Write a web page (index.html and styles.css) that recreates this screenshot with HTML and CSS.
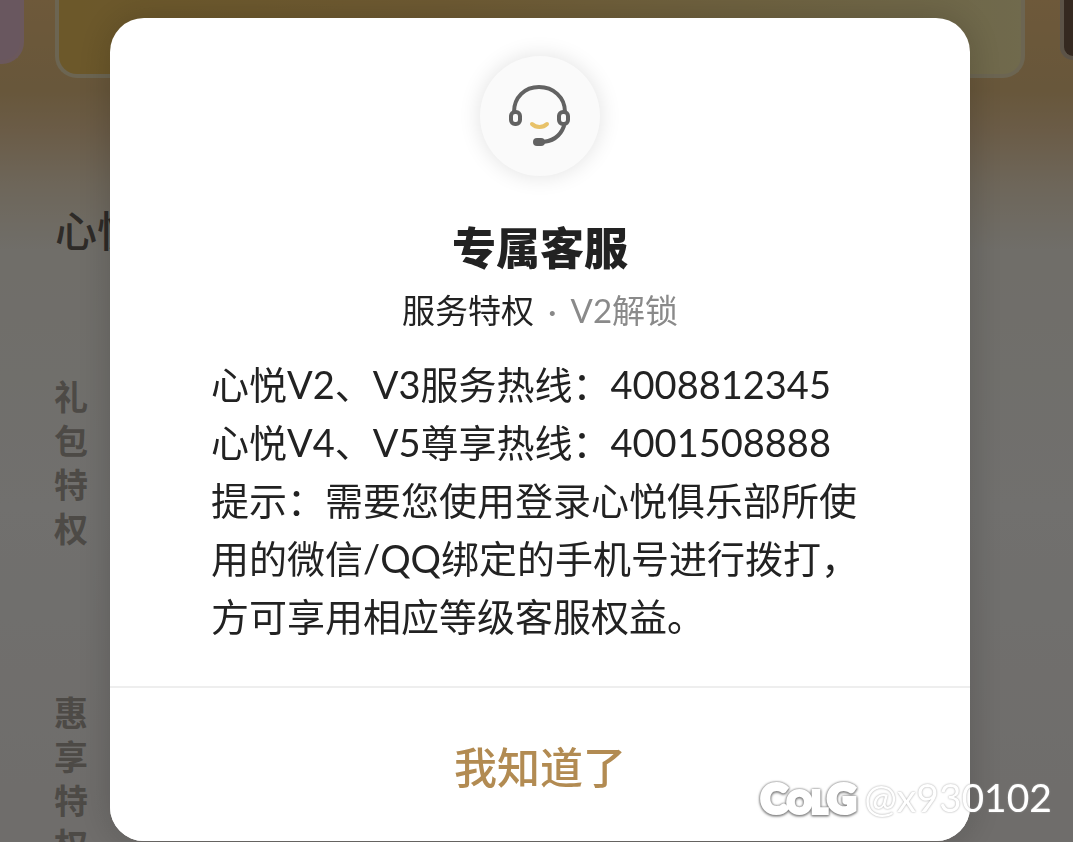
FILE: index.html
```html
<!DOCTYPE html>
<html lang="zh-Hans">
<head>
  <meta charset="UTF-8" />
  <meta name="viewport" content="width=device-width, initial-scale=1" />
  <title>专属客服</title>
  <link rel="stylesheet" href="styles.css">
</head>
<body>

<main class="page">
  <div class="cards">
    <div class="card card-prev"></div>
    <div class="card card-current"></div>
    <div class="card card-next"></div>
  </div>
  <h1 class="page-title">心悦特权</h1>
  <h2 class="group">礼包特权</h2>
  <h2 class="group">惠享特权</h2>
</main>

<div class="overlay">
  <div class="dialog" role="dialog" aria-modal="true" aria-labelledby="dialog-title">
    <div class="badge">
      <svg width="66" height="66" viewBox="0 0 66 66" fill="none" stroke="#626262" stroke-linecap="round">
        <path d="M7 29C7 14 18 4 32 4S58 14 58 29" stroke-width="4"/>
        <rect x="4" y="29" width="9" height="12" rx="4" stroke-width="4"/>
        <rect x="52" y="29" width="9" height="12" rx="4" stroke-width="4"/>
        <path d="M57 43C53 54 44 59 33 59" stroke-width="4"/>
        <rect x="26" y="55" width="12" height="8" rx="4" fill="#626262" stroke="none"/>
        <path d="M25 41C29 45 36 45 40 41" stroke="#e8c269" stroke-width="4"/>
      </svg>
    </div>
    <h2 class="title" id="dialog-title">专属客服</h2>
    <p class="subtitle">服务特权<span class="dot">·</span><span class="unlock">V2解锁</span></p>
    <p class="content">
      心悦V2、V3服务热线：4008812345<br>
      心悦V4、V5尊享热线：4001508888<br>
      提示：需要您使用登录心悦俱乐部所使用的微信/QQ绑定的手机号进行拨打，方可享用相应等级客服权益。
    </p>
    <button class="confirm" type="button">我知道了</button>
  </div>
</div>

<div class="watermark">
  <span class="logo">C<small>OL</small>G</span>
  <span class="user">@x930102</span>
</div>

</body>
</html>
```

FILE: styles.css
```css
* {
  box-sizing: border-box;
}
body {
  margin: 0;
  height: 100vh;
  overflow: hidden;
  font-family: Lato, "Noto Sans CJK SC", sans-serif;
  color: #222;
}
h1, h2, p {
  margin: 0;
}
.page {
  height: 100vh;
  overflow: hidden;
  background: linear-gradient(#dcb274 0, #d0ae76 90px, #d6b88e 130px, #dccdb4 185px, #e0dcd2 250px, #e2e0dc 60%, #dedad6 100%);
}
.cards {
  display: flex;
  justify-content: space-between;
  align-items: flex-start;
  height: 206px;
}
.card {
  border: 4px solid #d8cba4;
  border-top: none;
}
.card-prev {
  width: 24px;
  height: 64px;
  border-color: #d6b0b8;
  border-left: none;
  border-radius: 0 0 22px 0;
  background: #d2aebe;
}
.card-current {
  flex: 1;
  height: 78px;
  margin: 0 35px 0 31px;
  border-radius: 0 0 22px 22px;
  background: linear-gradient(90deg, #d8b054, #dcb466 40%, #e0d49a);
}
.card-next {
  width: 13px;
  height: 60px;
  border-color: #b9a78f;
  border-right: none;
  border-radius: 0 0 0 18px;
  background: #6a5240;
}
.page-title {
  height: 169px;
  padding-left: 55px;
  font-size: 42px;
  font-weight: 500;
  line-height: 50px;
  white-space: nowrap;
  color: #5c5650;
}
.group {
  width: 34px;
  height: 316px;
  margin-left: 54px;
  font-size: 34px;
  font-weight: 700;
  line-height: 44px;
  color: #9a948c;
  word-break: break-all;
}
.overlay {
  position: fixed;
  inset: 0;
  padding: 18px 103px 0 110px;
  background: rgba(0, 0, 0, 0.5);
}
.dialog {
  display: flex;
  flex-direction: column;
  align-items: center;
  padding-top: 38px;
  overflow: hidden;
  border-radius: 34px;
  background: #fff;
  box-shadow: 0 0 36px rgba(0, 0, 0, 0.18);
}
.badge {
  display: flex;
  align-items: center;
  justify-content: center;
  width: 120px;
  height: 120px;
  border-radius: 50%;
  background: #fafafa;
  box-shadow: 0 0 22px rgba(0, 0, 0, 0.12);
}
.title {
  margin-top: 42px;
  font-size: 44px;
  font-weight: 900;
  line-height: 60px;
}
.subtitle {
  margin-top: 11px;
  font-size: 33px;
  line-height: 42px;
}
.dot {
  margin: 0 14px;
  color: #888;
}
.unlock {
  color: #8a8a8a;
}
.content {
  width: 100%;
  margin-top: 24px;
  padding: 0 101px 41px;
  font-size: 38px;
  line-height: 58px;
}
.confirm {
  width: 100%;
  height: 155px;
  padding: 0;
  border: none;
  border-top: 2px solid #eee;
  background: #fff;
  color: #b28b52;
  font: 500 43px "Noto Sans CJK SC", sans-serif;
  cursor: pointer;
}
.watermark {
  position: fixed;
  right: 21px;
  bottom: 16px;
  display: flex;
  align-items: center;
  gap: 8px;
  color: #fff;
  line-height: 50px;
}
.logo {
  padding-top: 6px;
  font-size: 40px;
  font-weight: 900;
  -webkit-text-stroke: 4px #fff;
  filter: drop-shadow(0 0 1px #888) drop-shadow(0 1px 1px #777);
}
.logo small {
  font-size: 30px;
}
.user {
  font-size: 39px;
  text-shadow: 0 0 2px #999;
}
```
